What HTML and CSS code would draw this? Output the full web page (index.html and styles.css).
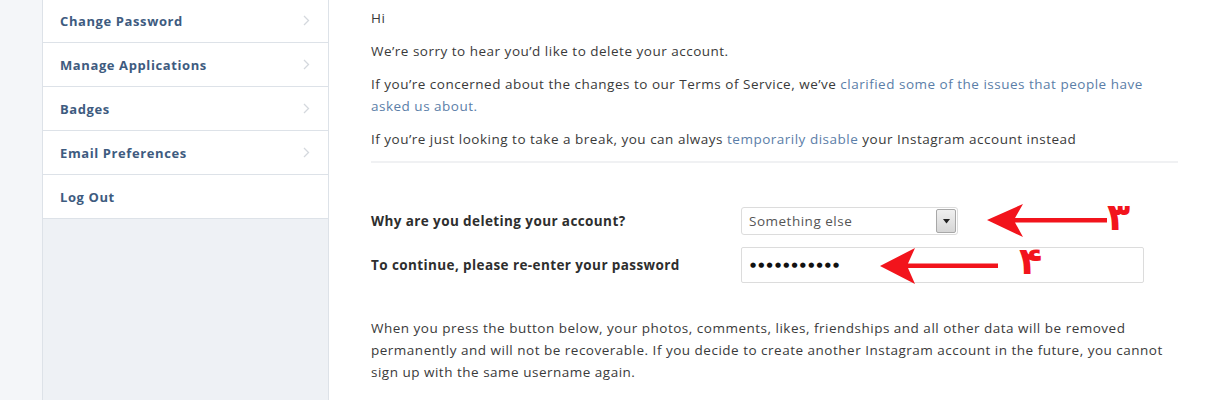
FILE: index.html
```html
<!DOCTYPE html>
<html>
<head>
<meta charset="utf-8">
<link rel="stylesheet" href="styles.css">
</head>
<body>
<div class="page">
  <div class="gutter"></div>
  <nav class="sidebar">
    <ul class="menu">
      <li class="menu-item"><span>Change Password</span><svg class="chev" width="7" height="11" viewBox="0 0 7 11"><polyline points="1,1 5.5,5.5 1,10" fill="none" stroke="#d4d8dd" stroke-width="1.3"/></svg></li>
      <li class="menu-item"><span>Manage Applications</span><svg class="chev" width="7" height="11" viewBox="0 0 7 11"><polyline points="1,1 5.5,5.5 1,10" fill="none" stroke="#d4d8dd" stroke-width="1.3"/></svg></li>
      <li class="menu-item"><span>Badges</span><svg class="chev" width="7" height="11" viewBox="0 0 7 11"><polyline points="1,1 5.5,5.5 1,10" fill="none" stroke="#d4d8dd" stroke-width="1.3"/></svg></li>
      <li class="menu-item"><span>Email Preferences</span><svg class="chev" width="7" height="11" viewBox="0 0 7 11"><polyline points="1,1 5.5,5.5 1,10" fill="none" stroke="#d4d8dd" stroke-width="1.3"/></svg></li>
      <li class="menu-item"><span>Log Out</span></li>
    </ul>
  </nav>
  <main class="main">
    <p>Hi</p>
    <p>We’re sorry to hear you’d like to delete your account.</p>
    <p>If you’re concerned about the changes to our Terms of Service, we’ve <a href="#">clarified some of the issues that people have<br>asked us about.</a></p>
    <p>If you’re just looking to take a break, you can always <a href="#">temporarily disable</a> your Instagram account instead</p>
    <hr class="sep">
    <form class="form">
      <div class="row row-select">
        <label class="label">Why are you deleting your account?</label>
        <div class="select">
          <span class="select-text">Something else</span>
          <span class="select-btn"><svg width="7" height="5" viewBox="0 0 7 5"><polygon points="0,0 7,0 3.5,4.5" fill="#222"/></svg></span>
        </div>
        <svg class="arrow arrow-1" width="122" height="36" viewBox="0 0 122 36"><path d="M0,17 L36,1 L28,15 L120,15 L120,19.5 L28,19.5 L36,34 Z" fill="#f2141c"/></svg>
        <span class="num num-1">۳</span>
      </div>
      <div class="row row-pass">
        <label class="label">To continue, please re-enter your password</label>
        <div class="input"><span class="dots">●●●●●●●●●●●</span></div>
        <svg class="arrow arrow-2" width="120" height="38" viewBox="0 0 120 38"><path d="M0,19 L35,1 L28,16.5 L118,16.5 L118,21 L28,21 L35,37 Z" fill="#f2141c"/></svg>
        <span class="num num-2">۴</span>
      </div>
    </form>
    <p class="warning">When you press the button below, your photos, comments, likes, friendships and all other data will be removed<br>permanently and will not be recoverable. If you decide to create another Instagram account in the future, you cannot<br>sign up with the same username again.</p>
  </main>
</div>
</body>
</html>
```

FILE: styles.css
```css
html, body {
  margin: 0;
  padding: 0;
  background: #ffffff;
  height: 400px;
  overflow: hidden;
}
body {
  font-family: "Open Sans", "Liberation Sans", sans-serif;
  color: #3a3a3a;
}
.page {
  display: flex;
  height: 400px;
}
.gutter {
  width: 42px;
  flex: none;
  background: #f4f6f9;
}
.sidebar {
  width: 285px;
  flex: none;
  background: #eef1f5;
  border-left: 1px solid #dde2e8;
  border-right: 1px solid #dde2e8;
}
.menu {
  list-style: none;
  margin: -1px 0 0;
  padding: 0;
}
.menu-item {
  height: 43px;
  border-bottom: 1px solid #dde2e8;
  background: #ffffff;
  display: flex;
  align-items: center;
  justify-content: space-between;
  padding: 0 18px 0 17px;
  font-size: 13px;
  letter-spacing: 0.6px;
  font-weight: 700;
  color: #3e5b7f;
}
.chev {
  display: block;
}
.main {
  flex: 1;
  padding: 7px 52px 0 42px;
  font-size: 13.5px;
  letter-spacing: 0.5px;
}
.main p {
  margin: 0 0 11px;
  line-height: 22px;
}
.main a {
  color: #5b7ea8;
  text-decoration: none;
}
.sep {
  border: 0;
  border-top: 2px solid #f0f1f3;
  margin: 9px 0 0;
}
.form {
  margin-top: 44px;
}
.row {
  position: relative;
  display: flex;
  align-items: center;
}
.label {
  width: 370px;
  flex: none;
  font-weight: 700;
  color: #2e2e2e;
  font-size: 13.5px;
  letter-spacing: 0.4px;
}
.select {
  width: 207px;
  height: 26px;
  border: 1px solid #dcdcdc;
  border-radius: 3px;
  display: flex;
  align-items: center;
  justify-content: space-between;
  padding: 0 1px 0 7px;
}
.select-text {
  color: #555;
}
.select-btn {
  width: 18px;
  height: 22px;
  border: 1px solid #a8a8a8;
  border-radius: 2px;
  background: linear-gradient(#f0f0f0, #d6d6d6);
  display: flex;
  align-items: center;
  justify-content: center;
}
.row-pass {
  margin-top: 12px;
}
.input {
  width: 393px;
  height: 34px;
  border: 1px solid #dcdcdc;
  border-radius: 2px;
  display: flex;
  align-items: center;
  padding-left: 8px;
}
.dots {
  font-family: "DejaVu Sans", sans-serif;
  font-size: 7px;
  letter-spacing: 2.2px;
  color: #111;
}
.arrow {
  position: absolute;
}
.arrow-1 {
  left: 616px;
  top: -4px;
}
.arrow-2 {
  left: 509px;
  top: 0px;
}
.num {
  position: absolute;
  font-family: "DejaVu Sans", sans-serif;
  font-weight: 700;
  color: #f2141c;
  line-height: 1;
  letter-spacing: 0;
}
.num-1 {
  left: 736px;
  top: -9px;
  font-size: 38px;
}
.num-2 {
  left: 648px;
  top: -5px;
  font-size: 38px;
}
.main p.warning {
  margin-top: 34px;
  line-height: 22px;
}
```
